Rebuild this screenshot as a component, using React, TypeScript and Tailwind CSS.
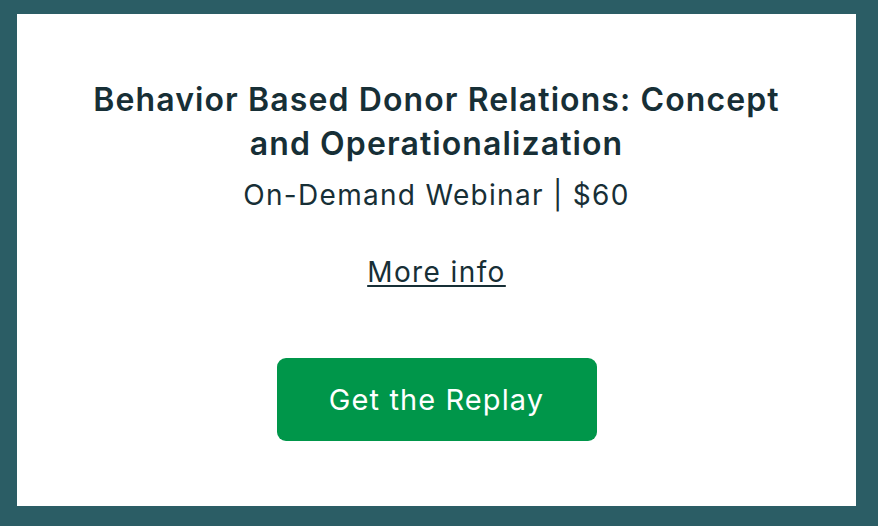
import React from "react";

export default function App() {
  return (
    <div className="w-[878px] h-[526px] bg-[#2b5d65] pl-[17px] pr-[22px] pt-[14px] pb-[20px]" style={{ fontFamily: "Inter, 'Noto Sans', sans-serif" }}>
      <div className="w-full h-full bg-white flex flex-col items-center pt-[64px] text-[#172f36]">
        <h1 className="text-[32px] leading-[44px] font-semibold text-center tracking-[1.1px] max-w-[710px]">
          Behavior Based Donor Relations: Concept and Operationalization
        </h1>
        <p className="text-[28px] leading-[36px] mt-[11px] tracking-[1.3px]">On-Demand Webinar | $60</p>
        <a href="#" className="text-[28px] leading-[36px] mt-[41px] underline underline-offset-[3px] decoration-[2px] tracking-[1.4px]">
          More info
        </a>
        <button className="mt-[68px] w-[320px] h-[83px] rounded-[9px] bg-[#00964a] text-white text-[29px] tracking-[1.1px]">
          Get the Replay
        </button>
      </div>
    </div>
  );
}
